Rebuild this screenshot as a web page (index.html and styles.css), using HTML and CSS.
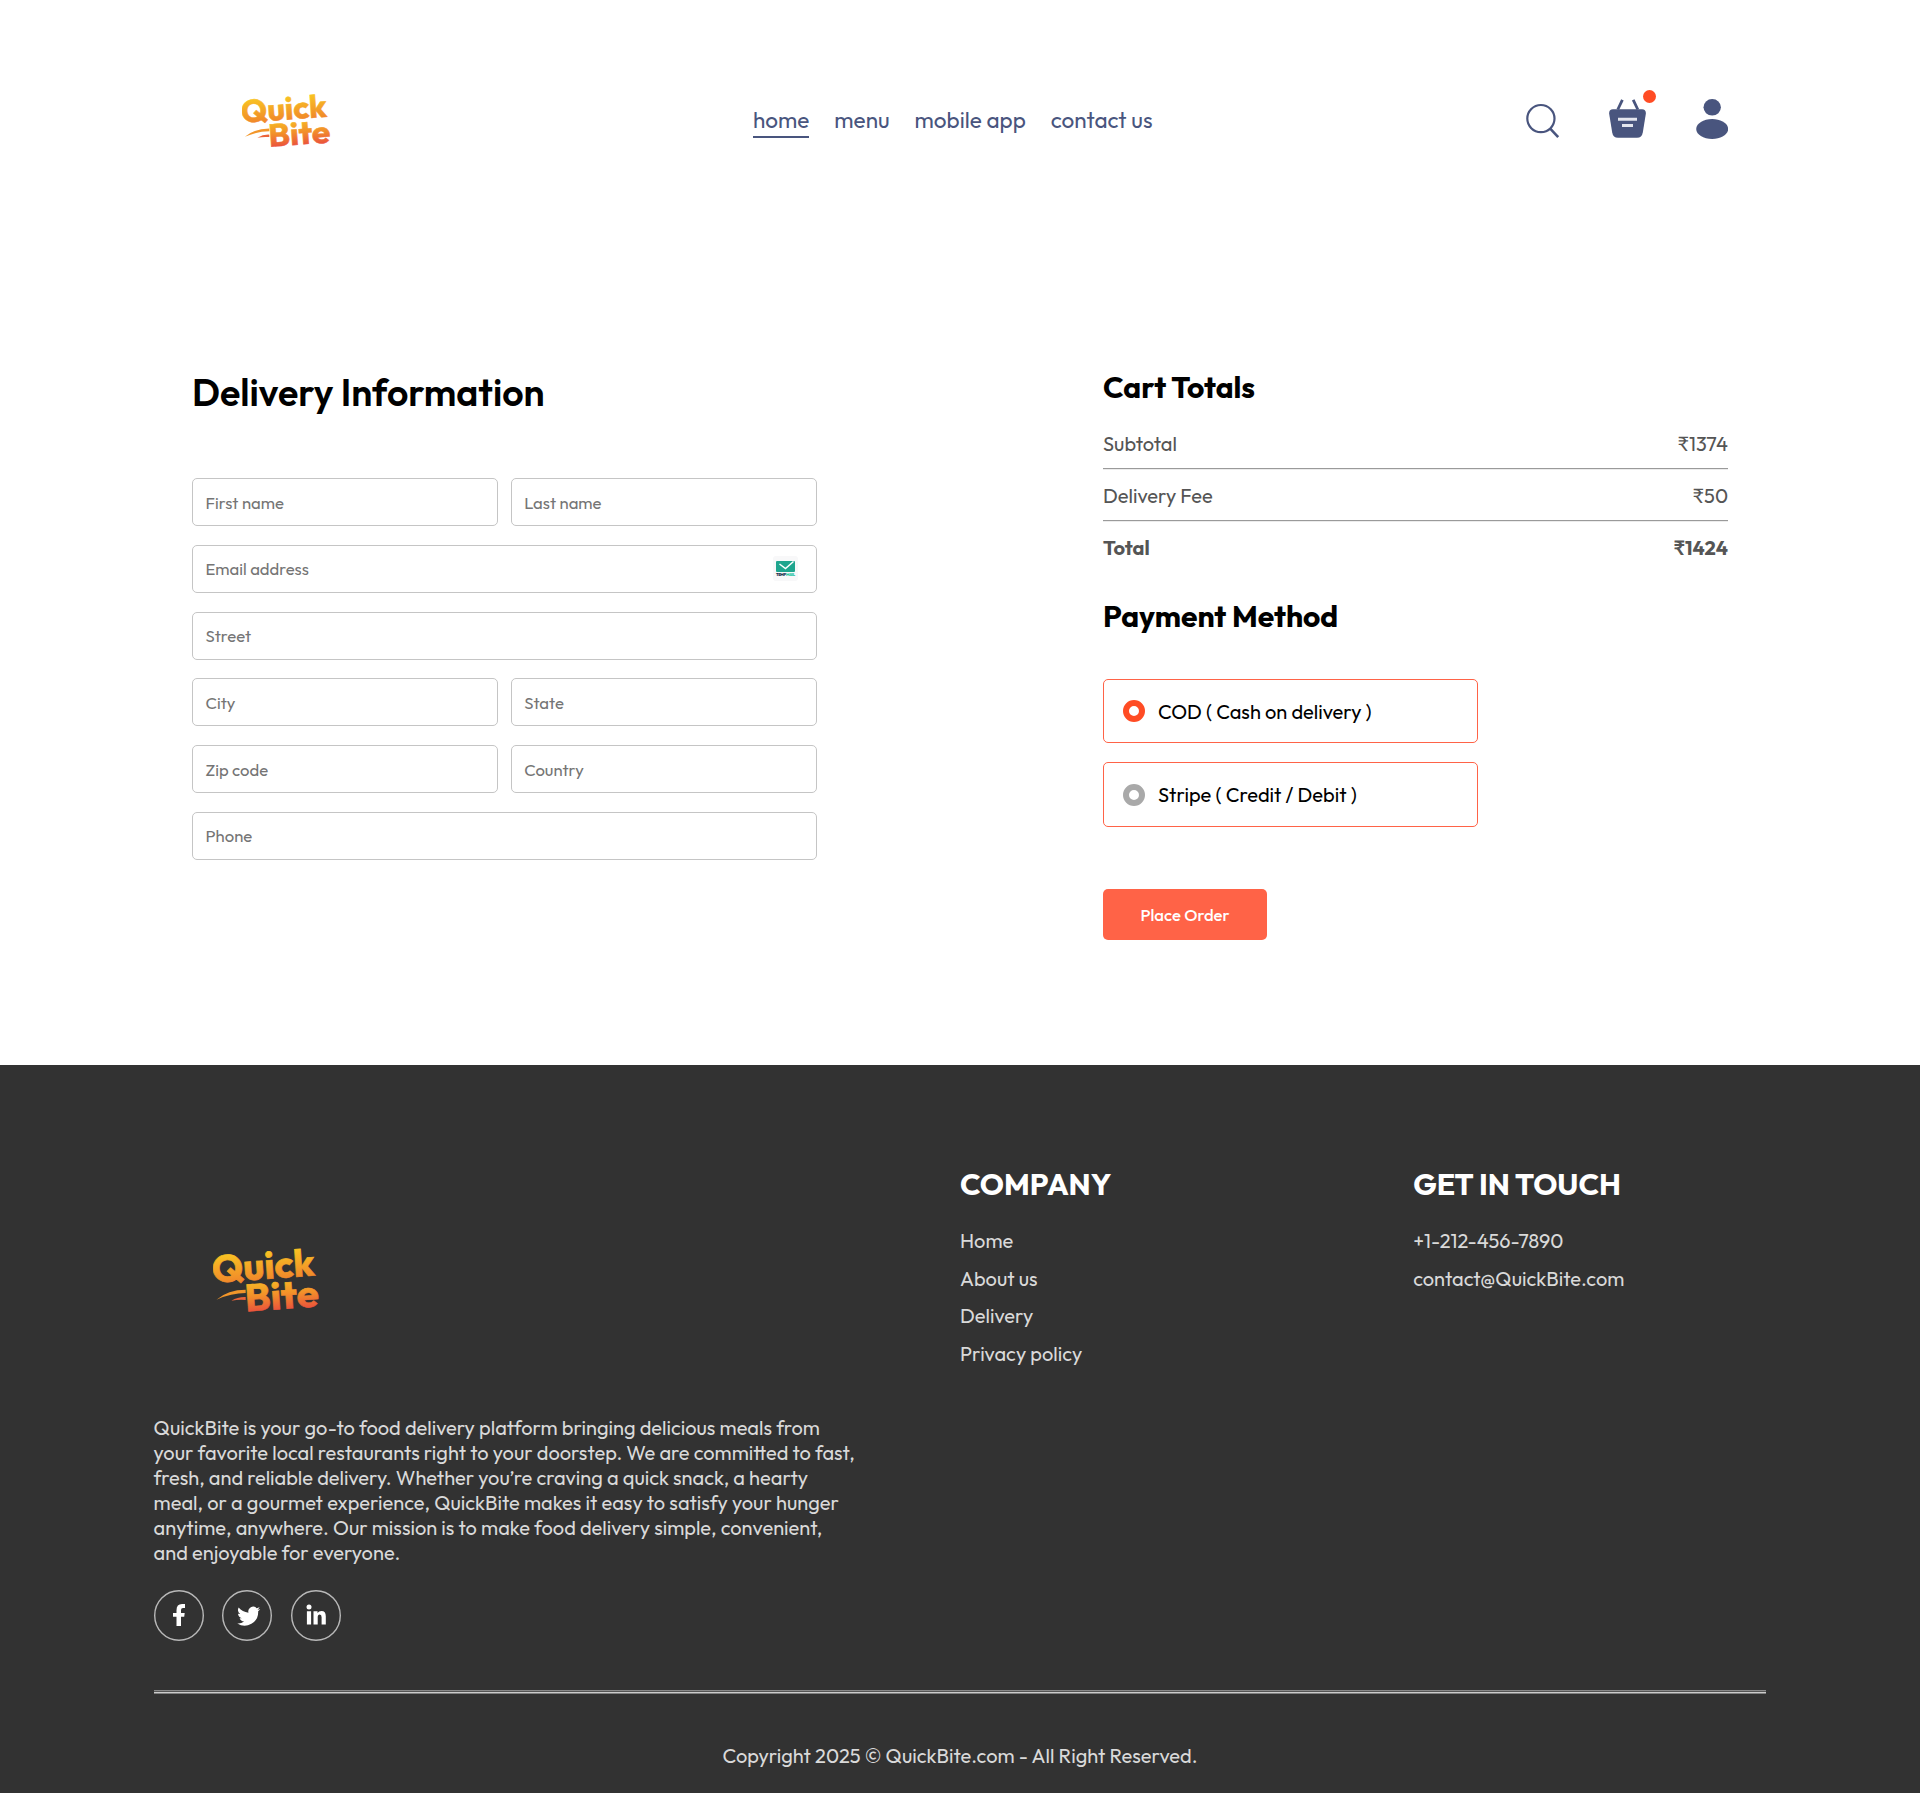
FILE: index.html
```html
<!DOCTYPE html>
<html lang="en">
<head>
<meta charset="utf-8">
<title>QuickBite</title>
<link rel="stylesheet" href="styles.css">
</head>
<body>
<svg class="defs" width="0" height="0" aria-hidden="true">
  <defs>
    <linearGradient id="brand-top" x1="0" y1="0" x2="0" y2="115" gradientUnits="userSpaceOnUse">
      <stop offset="0.15" stop-color="#f9c822"/><stop offset="1" stop-color="#f0842b"/>
    </linearGradient>
    <linearGradient id="brand-bottom" x1="0" y1="100" x2="0" y2="196" gradientUnits="userSpaceOnUse">
      <stop offset="0" stop-color="#f7bc24"/><stop offset="0.5" stop-color="#f2902a"/><stop offset="1" stop-color="#ea523c"/>
    </linearGradient>
    <symbol id="brand" viewBox="0 0 320 196">
      <g class="brand-text">
        <text x="-1" y="107" textLength="309" lengthAdjust="spacingAndGlyphs" transform="rotate(-4 0 105)" fill="url(#brand-top)" stroke="url(#brand-top)">Quick</text>
        <text x="98" y="193" textLength="222" lengthAdjust="spacingAndGlyphs" transform="rotate(-4 105 194)" fill="url(#brand-bottom)" stroke="url(#brand-bottom)">Bite</text>
      </g>
      <path d="M10 158Q45 128 98 128V138Q55 138 10 158Z" fill="#f2962a"/>
      <path d="M55 161Q75 149 98 150V159Q78 157 55 161Z" fill="#ec643a"/>
    </symbol>
  </defs>
</svg>

<header class="navbar">
  <a class="navbar-logo"><svg width="89" height="54.4"><use href="#brand"/></svg></a>
  <nav class="navbar-menu">
    <a class="active">home</a>
    <a>menu</a>
    <a>mobile app</a>
    <a>contact us</a>
  </nav>
  <div class="navbar-right">
    <svg width="34" height="36" viewBox="0 0 34 36" fill="none" stroke="#49557e" stroke-width="2.2"><circle cx="14.9" cy="15.6" r="13.6"/><path d="M24.2 25.600l8 8.500" stroke-width="2.6"/></svg>
    <div class="basket">
      <svg width="37" height="39" viewBox="0 0 37 39"><path d="M13.4.8L8.8 10.500M24.200.8l4.600 9.700" fill="none" stroke="#49557e" stroke-width="2.8"/><path d="M4 10.200H33Q37.400 10.500 36.800 15L33.800 33.500Q32.900 38.800 28 38.800H9Q4.100 38.800 3.200 33.500L.2 15Q-.4 10.500 4 10.200Z" fill="#49557e"/><path d="M9 20.200H28M13 26.500H24" stroke="#e4e6ee" stroke-width="3"/></svg>
      <span class="dot"></span>
    </div>
    <svg width="32.5" height="40" viewBox="0 0 32.5 40" fill="#49557e"><ellipse cx="16.2" cy="8.3" rx="8.7" ry="8.3"/><path d="M16.200 20C25 20 32.200 24.500 32.200 30S25 40 16.200 40S.2 35.500.2 30S7.500 20 16.200 20Z"/></svg>
  </div>
</header>

<main class="order">
  <form class="delivery">
    <h1 class="title">Delivery Information</h1>
    <div class="fields">
      <div class="pair"><div class="field">First name</div><div class="field">Last name</div></div>
      <div class="field">Email address
        <svg class="mail" width="25" height="25" viewBox="0 0 25 25"><rect width="25" height="25" rx="3" fill="#f8f8f9"/><rect x="3" y="5" width="19" height="11" rx="1" fill="#1fa58e"/><path d="M6.500 8l6 4.500L20.500 5.500" fill="none" stroke="#fff" stroke-width="1.5"/><text x="3" y="19.5" font-size="4" font-weight="900" textLength="10" fill="#23314f">TEMP</text><text x="13" y="19.5" font-size="4" font-weight="900" textLength="9" fill="#1fc5a0">MAIL</text></svg>
      </div>
      <div class="field">Street</div>
      <div class="pair"><div class="field">City</div><div class="field">State</div></div>
      <div class="pair"><div class="field">Zip code</div><div class="field">Country</div></div>
      <div class="field">Phone</div>
    </div>
  </form>
  <section class="summary">
    <h2 class="heading">Cart Totals</h2>
    <div class="totals">
      <div class="row"><span>Subtotal</span><span>₹1374</span></div>
      <div class="row"><span>Delivery Fee</span><span>₹50</span></div>
      <div class="row total"><b>Total</b><b>₹1424</b></div>
    </div>
    <h2 class="heading pay">Payment Method</h2>
    <div class="option selected"><i></i><span>COD ( Cash on delivery )</span></div>
    <div class="option"><i></i><span>Stripe ( Credit / Debit )</span></div>
    <button class="place" type="button">Place Order</button>
  </section>
</main>

<footer class="footer">
  <div class="footer-content">
    <div class="about">
      <svg class="footer-logo" width="106.7" height="65.3"><use href="#brand"/></svg>
      <p>QuickBite is your go-to food delivery platform bringing delicious meals from<br>your favorite local restaurants right to your doorstep. We are committed to fast,<br>fresh, and reliable delivery. Whether you’re craving a quick snack, a hearty<br>meal, or a gourmet experience, QuickBite makes it easy to satisfy your hunger<br>anytime, anywhere. Our mission is to make food delivery simple, convenient,<br>and enjoyable for everyone.</p>
      <div class="social">
        <svg width="50" height="51" viewBox="0 0 50 51"><ellipse cx="25" cy="25.5" rx="24.300" ry="24.700" fill="none" stroke="#b8b8b8" stroke-width="1.4"/><path d="M22.500 36V26.800H19V23H22.500V20.200Q22.500 14 28 14H31V18H29Q27 18 27 20V23H30.700L30.200 26.800H27V36Z" fill="#fff"/></svg>
        <svg width="50" height="51" viewBox="0 0 50 51"><ellipse cx="25" cy="25.5" rx="24.300" ry="24.700" fill="none" stroke="#b8b8b8" stroke-width="1.4"/><path transform="translate(15.300 13.800) scale(.97)" d="M23.600 5.300c-.9.400-1.800.6-2.800.8 1-.6 1.800-1.600 2.200-2.700-1 .6-2 1-3.100 1.200a4.900 4.900 0 0 0-8.400 4.500C7.400 8.900 3.800 7 1.400 3.900a4.900 4.900 0 0 0 1.500 6.600c-.8 0-1.600-.2-2.200-.6v.1c0 2.300 1.700 4.300 3.900 4.800-.7.200-1.500.2-2.200.1.600 1.900 2.400 3.300 4.600 3.400A9.900 9.900 0 0 1 0 20.300 14 14 0 0 0 21.500 7.800c.9-.7 1.500-1.500 2.100-2.500z" fill="#fff"/></svg>
        <svg width="50" height="51" viewBox="0 0 50 51"><ellipse cx="25" cy="25.5" rx="24.300" ry="24.700" fill="none" stroke="#b8b8b8" stroke-width="1.4"/><circle cx="18" cy="17" r="2.5" fill="#fff"/><path d="M15.900 21.200H20.100V34.500H15.900ZM22.500 21.200H26.500V23Q27.800 20.900 30.500 20.900Q34.800 20.900 34.800 26.200V34.500H30.600V27.200Q30.600 24.600 28.800 24.600Q26.700 24.600 26.700 27.400V34.500H22.500Z" fill="#fff"/></svg>
      </div>
    </div>
    <div class="links">
      <h2>COMPANY</h2>
      <ul><li>Home</li><li>About us</li><li>Delivery</li><li>Privacy policy</li></ul>
    </div>
    <div class="links">
      <h2>GET IN TOUCH</h2>
      <ul><li>+1-212-456-7890</li><li>contact@QuickBite.com</li></ul>
    </div>
  </div>
  <hr>
  <p class="copyright">Copyright 2025 © QuickBite.com - All Right Reserved.</p>
</footer>
</body>
</html>
```
FILE: styles.css
```css
* { box-sizing: border-box; margin: 0; padding: 0; }
body { font-family: Outfit, Lato, "Noto Sans", sans-serif; font-size: 20px; line-height: 25px; background: #fff; color: #000; }
.defs { display: block; height: 0; }
.brand-text { font-family: Outfit, Lato, sans-serif; font-weight: 700; font-size: 114px; stroke-width: 2px; }

.navbar { display: flex; justify-content: space-between; align-items: flex-start; height: 240px; padding: 0 192px; }
.navbar-logo { width: 187px; padding: 93px 0 0 50px; }
.navbar-menu { display: flex; gap: 25px; padding-top: 106px; font-size: 22.5px; line-height: 28px; color: #49557e; }
.navbar-menu a { height: 32px; white-space: nowrap; }
.navbar-menu .active { border-bottom: 2px solid #49557e; }
.navbar-right { display: flex; gap: 49.5px; padding-top: 99px; }
.navbar-right > svg:first-child { margin: 4px 0 0 -1px; }
.basket { position: relative; height: 39px; }
.dot { position: absolute; top: -9px; right: -10px; width: 13px; height: 13px; border-radius: 50%; background: #ff4c24; }

.order { display: flex; justify-content: space-between; height: 825px; padding: 0 192px; }
.delivery, .summary { width: 625px; }
.title { margin-top: 129px; font-size: 37.5px; line-height: 47px; font-weight: 600; }
.fields { display: flex; flex-direction: column; gap: 18.75px; margin-top: 62px; }
.pair { display: flex; gap: 12.5px; }
.field { display: flex; flex: 1 1 auto; justify-content: space-between; align-items: center; width: 100%; height: 48px; padding: 0 18px 0 12.5px; border: 1px solid #c5c5c5; border-radius: 5px; font-size: 16.67px; line-height: 21px; color: #757575; }

.heading { margin-top: 128px; font-size: 30px; line-height: 38px; font-weight: 700; }
.totals { margin-top: 25px; color: #555; }
.row { display: flex; justify-content: space-between; height: 52px; }
.row:not(.total) { background: linear-gradient(#9a9a9a 50%, #ececec 50%) 0 37px / 100% 2px no-repeat; }
.heading.pay { margin-top: 10px; }
.option { display: flex; align-items: center; gap: 13px; width: 375px; height: 64.5px; padding: 0 19px; border: 1px solid #ff6347; border-radius: 5px; }
.option i { width: 22px; height: 22px; border: 6px solid #a9a9a9; border-radius: 50%; }
.option.selected { height: 64px; margin: 44px 0 19.25px; }
.option.selected i { border-color: #ff4c24; }
.place { display: block; width: 164px; height: 51px; margin-top: 62.5px; border: 0; border-radius: 5px; background: #ff6347; color: #fff; font: 500 16.67px/21px Outfit, Lato, sans-serif; }

.footer { height: 728px; background: #323232; color: #d9d9d9; }
.footer-content { display: grid; grid-template-columns: 2fr 1fr 1fr; column-gap: 100px; height: 625px; padding: 100px 153.6px 0; }
.about p { white-space: nowrap; }
.footer-logo { display: block; margin: 81.7px 0 103px 59.7px; }
.social { display: flex; gap: 18.75px; margin-top: 25px; }
.links h2 { font-size: 30px; line-height: 38px; color: #fff; }
.links ul { display: flex; flex-direction: column; gap: 12.5px; margin-top: 25.2px; list-style: none; }
.footer hr { height: 4px; margin: 0 153.6px; border: 0; background: linear-gradient(#8a8a8a 25%, #555 25% 50%, #ccc 50% 75%, #808080 75%); }
.copyright { margin-top: 49px; text-align: center; }
```
